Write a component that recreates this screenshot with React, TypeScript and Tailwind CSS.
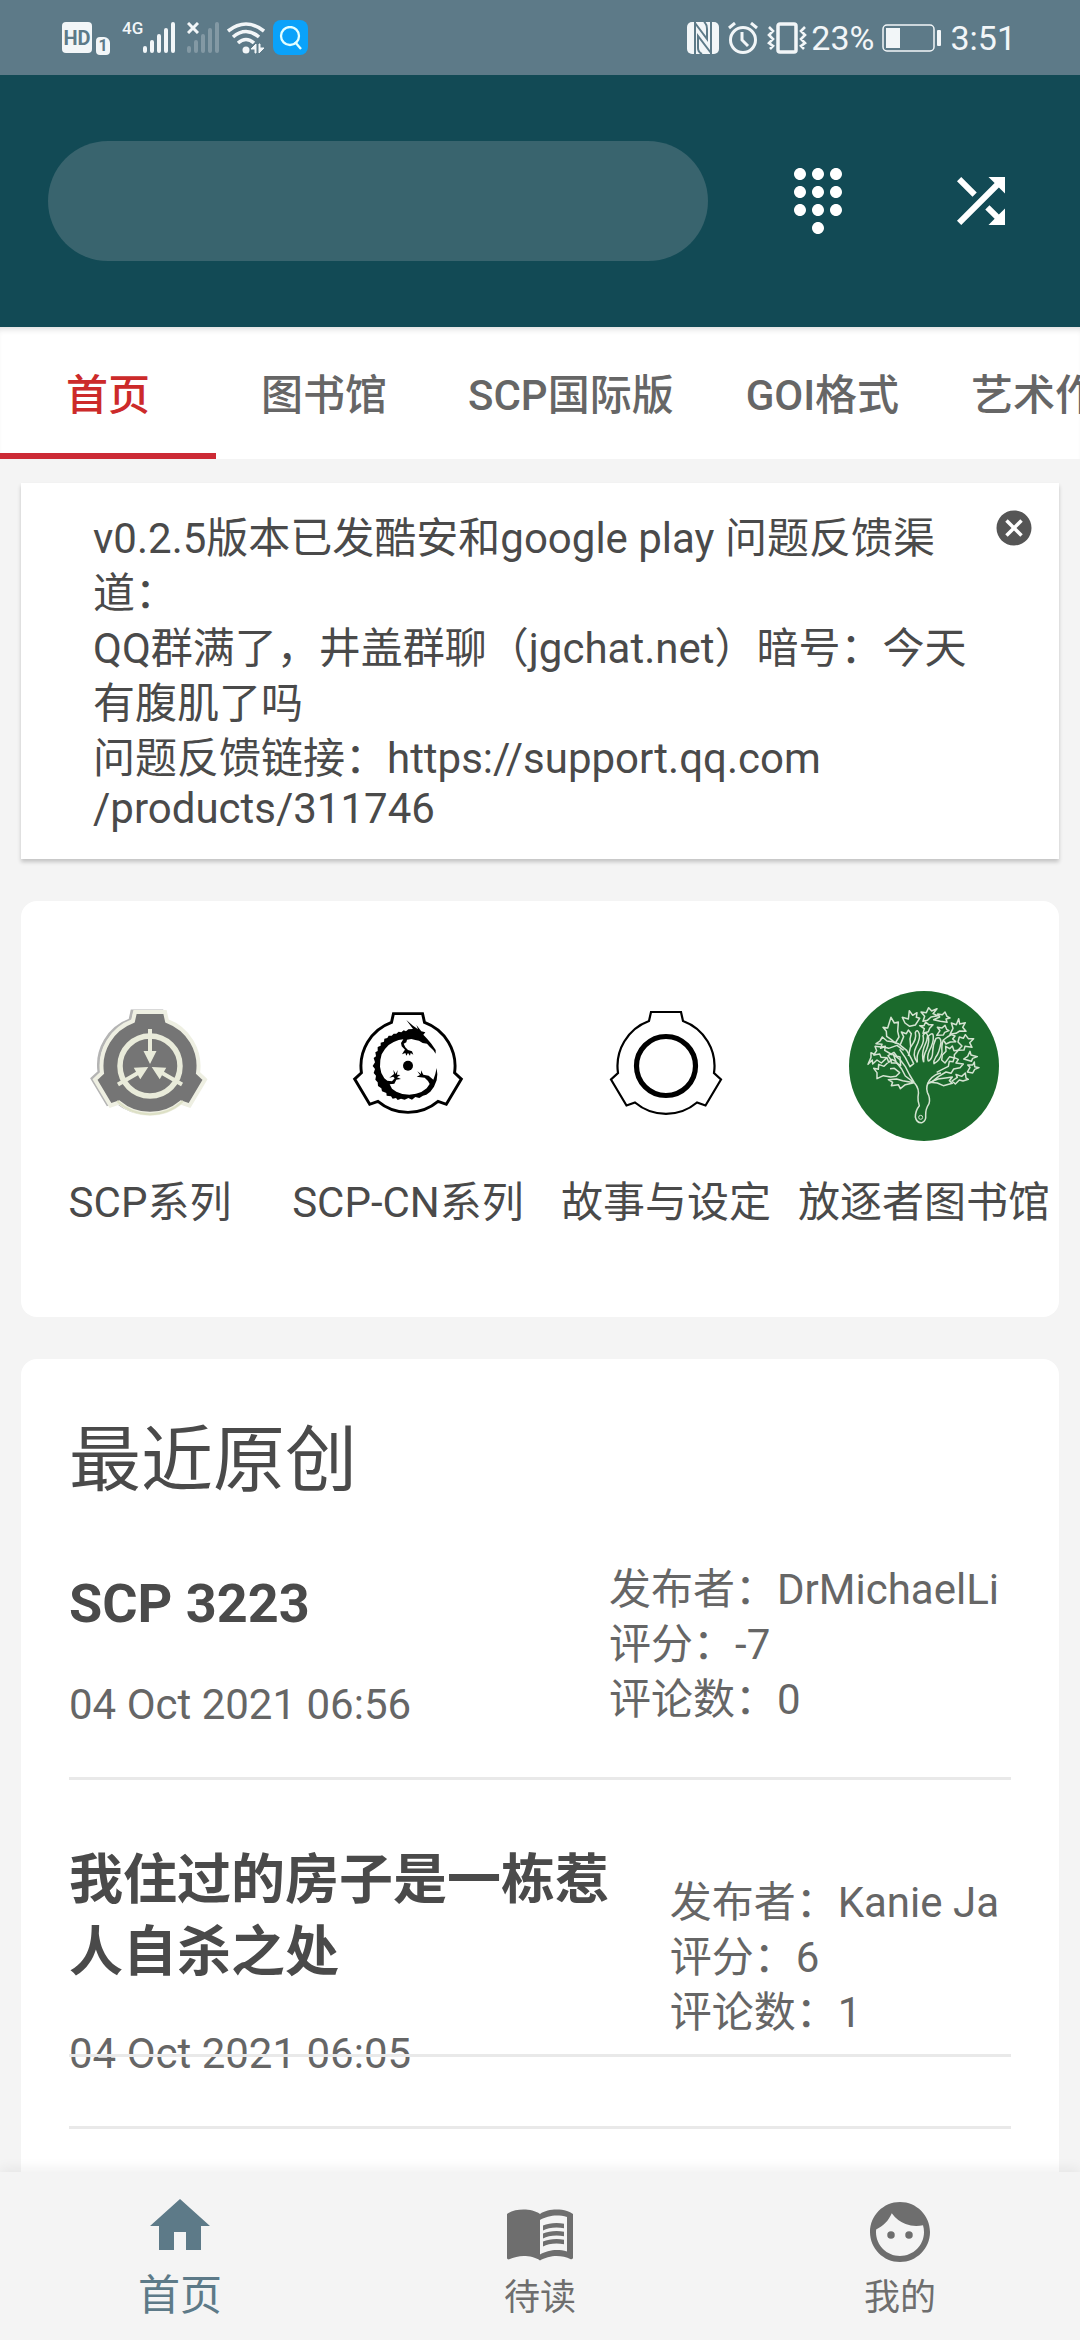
import type { ReactNode } from "react";
import { MdCancel, MdDialpad, MdFace, MdHome, MdMenuBook, MdShuffle } from "react-icons/md";

const EMBLEM =
  "M-15-54H15L17-45A48 48 0 0 1 48 7L55 13.500 39.500 39.500 31 36.500A48 48 0 0 1-31 36.500L-39.500 39.500-55 13.500-48 7A48 48 0 0 1-17-45Z";

const ScpLogo = () => (
  <svg viewBox="-75 -75 150 150" className="size-[150px]" aria-hidden="true">
    <path d={EMBLEM} transform="translate(-3 -1)" fill="none" stroke="#b4b4b4" strokeWidth="3" />
    <path d={EMBLEM} fill="#757575" stroke="#eeefe2" strokeWidth="4" />
    <path d="M-33 35A48 48 0 0 0 33 35" fill="none" stroke="#dde0c6" strokeWidth="2" />
    <circle r="30" fill="none" stroke="#e9ebda" strokeWidth="5.500" />
    {[0, 120, 240].map((angle) => (
      <path key={angle} d="M-2-37H2V-15H6.500L0-2-6.500-15H-2Z" fill="#e9ebda" transform={`rotate(${angle})`} />
    ))}
  </svg>
);

const ScpCnLogo = () => (
  <svg viewBox="-75 -75 150 150" className="size-[150px]" aria-hidden="true">
    <path d={EMBLEM} transform="scale(.97)" fill="none" stroke="#000" strokeWidth="3" />
    <g transform="scale(.3333) translate(-174 -195)">
      <circle cx="174" cy="194" r="15" />
      <path d="M257 158L250 148 239 137 231 128 218 126 207 119 196 117 184 114 171 116 169 124 161 128 166 139 174 147 186 151 190 161 182 156 180 164 174 156 169 164 166 156 156 160 162 150 165 146 155 136 153 126 160 115 146 117 131 123 116 132 105 144 95 160 91 177 90 197 94 216 103 232 112 239 126 241 134 232 130 227 118 230 132 219 130 206 137 219 143 207 141 221 151 222 141 229 153 234 139 236 133 248 119 250 126 263 139 272 157 279 178 281 198 278 214 273 230 262 239 249 234 240 224 230 211 229 200 227 210 222 202 211 213 219 213 208 220 221 236 224 250 236 256 219 260 201 262 220 260 238 252 257 241 272 229 281 219 284 208 291 196 288 186 296 175 291 164 296 153 293 143 297 138 291 128 293 123 286 110 284 109 276 96 271 94 262 84 255 83 244 76 236 78 224 71 216 75 204 68 195 75 184 71 171 78 166 76 154 83 150 83 138 92 134 92 125 102 122 103 113 112 111 116 104 125 104 131 98 139 98 146 92 154 94 161 88 168 91 175 85 189 84 169 57 189 74 204 85 199 72 214 91 226 94 220 101 232 114 244 128 257 147Z" />
    </g>
  </svg>
);

const StoryLogo = () => (
  <svg viewBox="-75 -75 150 150" className="size-[150px]" aria-hidden="true">
    <path d={EMBLEM} fill="none" stroke="#000" strokeWidth="2.200" />
    <circle r="29.500" fill="none" stroke="#000" strokeWidth="5.200" />
  </svg>
);

const LibraryLogo = () => (
  <svg viewBox="12 15 450 450" className="size-[150px]" aria-hidden="true">
    <circle cx="237" cy="240" r="225" fill="#1b6a2c" />
    <g fill="none" stroke="#d5e4d2" strokeWidth="4.500" strokeLinejoin="round">
      <path d="M208 290Q225 309 219 333 218 345 223 359 211 374 211 393 215 412 231 410 244 404 242 388 241 370 252 353 257 337 247 319 241 301 254 282 270 263 288 261" />
      <circle cx="227" cy="394" r="6" strokeWidth="3" />
      <path d="M208 290L194 267 181 242 166 222 145 205 153 227 170 249 181 270 207 290 181 296 166 308 160 296 139 299 143 289 130 281 155 279 173 284 207 290" />
      <path d="M153 227L141 220 131 229 126 215 108 214 104 204 86 207 95 194 90 181 108 183 121 181 119 193 143 207" />
      <path d="M126 215L109 231 96 222 83 234 82 222 69 235 78 214 78 200 91 207M128 230L117 241 101 235 100 250 86 247 96 260 96 278 115 269 137 273 153 271 164 260 148 247 135 248" />
      <path d="M129 209L147 199 156 211 165 213 167 239 154 231 139 231 138 222Z" />
      <path d="M176 193L156 178 131 187 116 183 107 187 111 175 93 173 105 165 112 153 126 165 142 167 160 173 185 193 197 214 206 233 195 242 181 215 164 190" />
      <path d="M151 171L139 161 125 151 124 136 114 124 128 126 138 94 148 111 160 108 158 136 162 153 151 171Z" />
      <path d="M165 178L176 152 169 138 184 143 190 132 199 143 195 159 197 181 190 210" />
      <path d="M197 183Q216 159 211 140 217 127 223 144 226 158 214 181 200 207 217 229" />
      <path d="M217 229Q213 205 228 184 239 164 234 149 243 133 248 149 247 165 237 184 229 208 236 229M236 229Q235 208 245 190 254 166 250 151 264 135 265 151 266 171 253 194 245 213 250 226" />
      <path d="M250 226Q263 218 263 197 264 174 273 157 287 150 288 169 283 200 272 214 265 224 267 233 286 223 291 199 289 177 295 162" />
      <path d="M194 121L180 111 172 94 190 99 193 74 203 88 216 80 214 94 224 97 211 117Z" />
      <path d="M234 106L239 91 228 78 244 80 251 65 260 75 276 68 264 83 278 89 258 93 247 103Z" />
      <path d="M266 101L284 93 278 84 292 86 300 78 306 91 315 96 303 99 306 109 286 106Z" />
      <path d="M234 142L238 128 224 119 237 119 242 108 251 116 264 116 254 127 250 137Z" />
      <path d="M275 148L285 134 277 124 291 126 300 118 305 130 312 134 299 139 295 147Z" />
      <path d="M315 145L324 127 319 111 334 116 341 98 344 114 361 110 353 124 363 136 344 135 333 142Z" />
      <path d="M295 162L307 153 319 146 330 150 323 159 332 167 316 168 303 174Z" />
      <path d="M339 193L351 180 339 168 343 153 355 157 361 146 370 158 386 158 374 170 381 184 360 181 357 192Z" />
      <path d="M292 207L303 196 302 181 314 188 322 180 327 194 340 193 328 206 328 216 314 212 300 231 290 222Z" />
      <path d="M275 259L292 250 310 241 313 226 324 227 328 215 340 220 333 231 355 234 345 245 326 249 318 262 303 258 281 271 259 289 247 293" />
      <path d="M356 219L368 211 375 196 378 207 397 212 383 217 379 226 364 221Z" />
      <path d="M367 258L375 244 368 237 383 237 388 228 389 242 402 245 389 250 383 261Z" />
      <path d="M255 289L279 279 307 275 322 273 313 284 322 292 295 299 277 291Z" />
      <path d="M321 285L337 274 333 265 350 271 361 261 363 276 370 280 354 285 343 282 331 294Z" />
    </g>
  </svg>
);

const SignalBars = ({ className }: { className: string }) => (
  <svg viewBox="0 0 32 31" className={className} aria-hidden="true">
    <path d="M2 26v3M9 20v9M16 14v15M23 8v21M30 2v27" fill="none" stroke="currentColor" strokeWidth="4" strokeLinecap="round" />
  </svg>
);

const StatusBar = () => (
  <div className="flex h-[75px] shrink-0 items-center justify-between bg-[#5d7a88] pr-16 pl-[62px] text-[#f2f6f8]">
    <div className="flex items-center">
      <span className="flex h-[31px] w-[30px] items-center justify-center rounded bg-[#f2f6f8] text-[20px] font-bold text-[#5d7a88]">HD</span>
      <span className="ml-1 flex h-[18px] w-[14px] items-center justify-center self-end rounded-sm rounded-tr-md bg-[#f2f6f8] text-[16px] font-bold text-[#5d7a88]">1</span>
      <span className="ml-3 self-start text-[17px] leading-[17px] font-medium">4G</span>
      <SignalBars className="h-[31px] w-8" />
      <span className="relative ml-3">
        <SignalBars className="h-[31px] w-8 text-[#8399a4]" />
        <svg viewBox="0 0 12 12" className="absolute top-0 left-0 size-3" aria-hidden="true">
          <path d="M1 1l10 10M11 1L1 11" stroke="currentColor" strokeWidth="3" />
        </svg>
      </span>
      <svg viewBox="0 0 38 32" className="ml-2 h-8 w-[38px]" aria-hidden="true">
        <g fill="none" stroke="currentColor" strokeWidth="3.600">
          <path d="M1 9Q19-5 37 9M6 15Q19 4 32 15M11 21Q19 14 27 21" />
        </g>
        <circle cx="19" cy="28" r="3.500" fill="currentColor" />
        <path d="M29 22v9h-1v-4h-4zM32 31v-9h1v4h4z" fill="currentColor" stroke="currentColor" />
      </svg>
      <span className="ml-2 flex size-[35px] items-center justify-center rounded-lg bg-[#0aa2fa]">
        <svg viewBox="0 0 24 24" className="size-6" fill="none" stroke="#e4ffff" strokeWidth="2.300" aria-hidden="true">
          <circle cx="11" cy="10" r="9" />
          <path d="M16 16l6 7" />
        </svg>
      </span>
    </div>
    <div className="flex items-center">
      <svg viewBox="0 0 32 32" className="size-8" aria-hidden="true">
        <rect width="32" height="32" rx="5" fill="currentColor" />
        <path d="M8 0v32M8 1L20 17V7q0-5-3-7M24 32V0M24 31L11 14v12q0 4 4 6" fill="none" stroke="#5d7a88" strokeWidth="2" />
      </svg>
      <svg viewBox="0 0 32 32" className="ml-2 size-8" fill="none" stroke="currentColor" strokeWidth="3" aria-hidden="true">
        <circle cx="16" cy="18" r="12.500" />
        <path d="M15 10v8l6 6M2 6l6-5M30 6l-6-5" />
      </svg>
      <svg viewBox="0 0 40 32" className="ml-2 h-8 w-10" fill="none" stroke="currentColor" strokeWidth="3.500" aria-hidden="true">
        <rect x="11" y="2" width="18" height="28" rx="2" />
        <path d="M2 5l4 4-4 4 4 4-4 4 4 3-3 3M38 5l-4 4 4 4-4 4 4 4-4 3 3 3" strokeWidth="2.600" />
      </svg>
      <span className="ml-1 text-[34px] leading-none">23%</span>
      <svg viewBox="0 0 60 28" className="ml-2 h-7 w-[60px]" aria-hidden="true">
        <rect x="1" y="1" width="51" height="26" rx="4" fill="none" stroke="currentColor" strokeWidth="1.500" />
        <rect x="4" y="4" width="14" height="20" fill="currentColor" />
        <rect x="55" y="6" width="4" height="16" rx="1" fill="currentColor" />
      </svg>
      <span className="ml-2 text-[34px] leading-none">3:51</span>
    </div>
  </div>
);

const TABS = ["首页", "图书馆", "SCP国际版", "GOI格式", "艺术作品"];

const CATEGORIES: { label: string; logo: ReactNode }[] = [
  { label: "SCP系列", logo: <ScpLogo /> },
  { label: "SCP-CN系列", logo: <ScpCnLogo /> },
  { label: "故事与设定", logo: <StoryLogo /> },
  { label: "放逐者图书馆", logo: <LibraryLogo /> },
];

const ARTICLES = [
  { title: "SCP 3223", date: "04 Oct 2021 06:56", author: "DrMichaelLi", score: -7, comments: 0 },
  { title: "我住过的房子是一栋惹人自杀之处", date: "04 Oct 2021 06:05", author: "Kanie Ja", score: 6, comments: 1 },
];

const Divider = () => <hr className="relative border-t-[3px] border-[#e9e9e9]" />;

const App = () => {
  return (
    <div lang="zh-CN" className="flex h-screen flex-col overflow-hidden bg-[#f4f4f4] font-['Roboto','Noto_Sans_CJK_SC',sans-serif] text-[42px] text-[#4a4a4a]">
      <StatusBar />

      <header className="flex h-[252px] shrink-0 items-center bg-[#124a55] pr-[63px] pl-12 text-white">
        <input type="search" aria-label="搜索" className="h-[120px] min-w-0 flex-1 rounded-full bg-[#39646e] px-12 outline-none" />
        <button type="button" aria-label="编号" className="ml-[74px]">
          <MdDialpad className="size-[72px]" />
        </button>
        <button type="button" aria-label="随机" className="ml-[91px]">
          <MdShuffle className="size-[72px]" />
        </button>
      </header>

      <nav className="flex h-[132px] shrink-0 overflow-hidden bg-white shadow-[inset_0_6px_6px_-4px_rgba(0,0,0,0.15)]">
        {TABS.map((tab, i) => (
          <button
            key={tab}
            type="button"
            className={`min-w-[216px] shrink-0 border-b-[6px] px-9 pt-2.5 font-medium ${i === 0 ? "border-[#cc2a35] text-[#cc2a2a]" : "border-transparent text-[#666]"}`}
          >
            {tab}
          </button>
        ))}
      </nav>

      <main className="min-h-0 flex-1 overflow-hidden px-[21px] pt-6">
        <section className="flex items-start justify-between bg-white pt-6 pr-6 pb-7 pl-[72px] shadow-[0_3px_4px_rgba(0,0,0,0.2)]">
          <div className="pt-1">
            <p className="leading-[55px]">
              v0.2.5版本已发酷安和google play 问题反馈渠
              <br />
              道：
              <br />
              QQ群满了，井盖群聊（jgchat.net）暗号：今天
              <br />
              有腹肌了吗
              <br />
              问题反馈链接：https://support.qq.com
            </p>
            <p className="leading-[45px]">/products/311746</p>
          </div>
          <button type="button" aria-label="关闭" className="shrink-0 text-[#555]">
            <MdCancel className="size-[42px]" />
          </button>
        </section>

        <section className="mt-[42px] flex rounded-2xl bg-white pt-[90px] pr-1.5 pb-[86px]">
          {CATEGORIES.map(({ label, logo }) => (
            <a key={label} href="#" className="flex flex-1 flex-col items-center gap-[34px] whitespace-nowrap">
              {logo}
              <span className="leading-[56px]">{label}</span>
            </a>
          ))}
        </section>

        <section className="mt-[42px] rounded-t-2xl bg-white px-12 pt-[60px] pb-40">
          <h2 className="text-[72px] leading-[84px]">最近原创</h2>
          <ul>
            {ARTICLES.map(({ title, date, author, score, comments }) => (
              <li key={title}>
                <div className="h-[274px] pt-[65px]">
                  <div className="flex items-center justify-between gap-6 pr-3">
                    <div>
                      <h3 className="text-[54px] leading-[72px] font-bold">{title}</h3>
                      <p className="mt-10 leading-[49px] text-[#666]">{date}</p>
                    </div>
                    <div className="-mt-2 shrink-0 leading-[55px] text-[#666]">
                      <p>发布者：{author}</p>
                      <p>评分：{score}</p>
                      <p>评论数：{comments}</p>
                    </div>
                  </div>
                </div>
                <Divider />
              </li>
            ))}
          </ul>
          <div className="mt-[69px]">
            <Divider />
          </div>
        </section>
      </main>

      <nav className="relative grid h-[168px] shrink-0 grid-cols-3 bg-[#f4f4f4] text-[36px] leading-[48px] text-[#6e6e6e] shadow-[0_-4px_12px_rgba(0,0,0,0.06)]">
        <a href="#" className="flex flex-col items-center gap-2.5 pt-[18px] text-[42px] text-[#5d7a88]">
          <MdHome className="size-[72px]" />
          <span>首页</span>
        </a>
        <a href="#" className="flex flex-col items-center gap-1.5 pt-6">
          <MdMenuBook className="size-[72px]" />
          <span>待读</span>
        </a>
        <a href="#" className="flex flex-col items-center gap-1.5 pt-6">
          <MdFace className="size-[72px]" />
          <span>我的</span>
        </a>
      </nav>
    </div>
  );
};

export default App;
